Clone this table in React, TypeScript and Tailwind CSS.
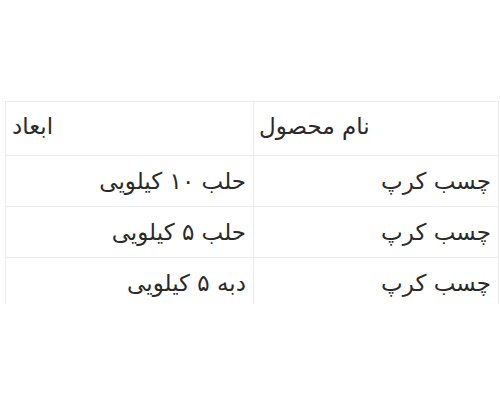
import React from "react";

const rows = [
  ["چسب کرپ", "حلب ۱۰ کیلویی"],
  ["چسب کرپ", "حلب ۵ کیلویی"],
  ["چسب کرپ", "دبه ۵ کیلویی"],
];

export default function App() {
  return (
    <div className="w-[500px] h-[400px] bg-white pt-[101px] pl-[5px] pr-[1px]" style={{ fontFamily: '"DejaVu Sans", sans-serif' }}>
      <div dir="rtl" className="w-[494px] h-[203px] overflow-hidden border-x border-t border-[#ebebeb] text-[#2a2a2a] text-[23px] leading-none">
        <div className="grid grid-cols-[245px_1fr] h-[54px] border-b border-[#ebebeb]">
          <div className="flex items-center justify-end pl-[5px] pb-[4px] border-l border-[#ebebeb]">نام محصول</div>
          <div className="flex items-center justify-end pl-[6px] pb-[4px]">ابعاد</div>
        </div>
        {rows.map((r, i) => (
          <div key={i} className="grid grid-cols-[245px_1fr] h-[51px] border-b border-[#ebebeb]">
            <div className="flex items-center pr-[7px] border-l border-[#ebebeb]">{r[0]}</div>
            <div className="flex items-center pr-[7px]">{r[1]}</div>
          </div>
        ))}
      </div>
    </div>
  );
}
